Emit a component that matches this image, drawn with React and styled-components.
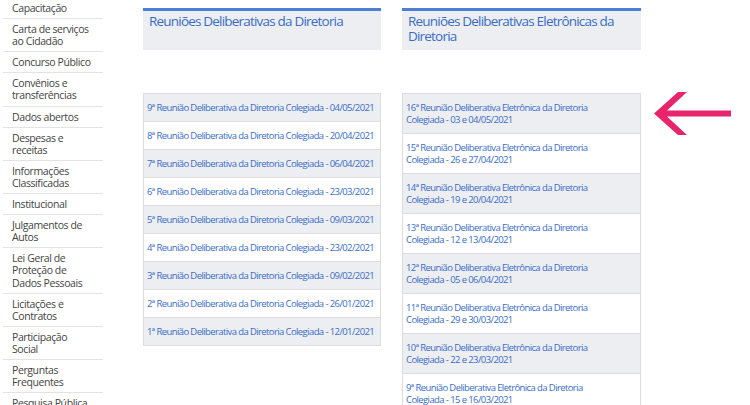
import React from "react";
import styled, { createGlobalStyle } from "styled-components";

const Global = createGlobalStyle`
  html, body { margin: 0; padding: 0; background: #fff; overflow: hidden; }
  body { font-family: "Open Sans", "Liberation Sans", sans-serif; }
`;

const Page = styled.div`
  display: flex;
  align-items: flex-start;
  height: 405px;
  overflow: hidden;
  padding-left: 3px;
`;

const Sidebar = styled.ul`
  list-style: none;
  margin: -2px 0 0 0;
  padding: 0;
  width: 100px;
  flex-shrink: 0;
`;

const SideItem = styled.li`
  padding: 4px 10px 4px 9px;
  border-bottom: 1px solid #e3e3e3;
  font-size: 10.5px;
  letter-spacing: -0.4px;
  line-height: 12.1px;
  color: #444;
`;

const Columns = styled.div`
  display: flex;
  gap: 21px;
  margin-left: 40px;
  padding-top: 8px;
`;

const Column = styled.div`
  width: ${(p) => p.$w}px;
  display: flex;
  flex-direction: column;
`;

const Header = styled.div`
  border-top: 3px solid #4a7fd6;
  background: #eceef1;
  height: 42px;
  padding: 3px 6px 0;
  box-sizing: border-box;
  font-size: 13.5px;
  letter-spacing: -0.8px;
  line-height: 15px;
  color: #3a6cc6;
`;

const List = styled.div`
  margin-top: 43px;
  border: 1px solid #dcdcdc;
  border-bottom: none;
`;

const Row = styled.div`
  background: ${(p) => (p.$alt ? "#eceef1" : "#fff")};
  border-bottom: 1px solid #dcdcdc;
  padding: 8px ${(p) => p.$pr}px 7px 3px;
  font-size: 9.5px;
  letter-spacing: -0.6px;
  line-height: 12px;
  color: #3a6cc6;
  white-space: ${(p) => (p.$nowrap ? "nowrap" : "normal")};
`;

const ArrowWrap = styled.div`
  margin-left: 12px;
  margin-top: 91px;
`;

const side = [
  "Capacitação",
  "Carta de serviços ao Cidadão",
  "Concurso Público",
  "Convênios e transferências",
  "Dados abertos",
  "Despesas e receitas",
  "Informações Classificadas",
  "Institucional",
  "Julgamentos de Autos",
  "Lei Geral de Proteção de Dados Pessoais",
  "Licitações e Contratos",
  "Participação Social",
  "Perguntas Frequentes",
  "Pesquisa Pública",
];

const left = [
  "9ª Reunião Deliberativa da Diretoria Colegiada - 04/05/2021",
  "8ª Reunião Deliberativa da Diretoria Colegiada - 20/04/2021",
  "7ª Reunião Deliberativa da Diretoria Colegiada - 06/04/2021",
  "6ª Reunião Deliberativa da Diretoria Colegiada - 23/03/2021",
  "5ª Reunião Deliberativa da Diretoria Colegiada - 09/03/2021",
  "4ª Reunião Deliberativa da Diretoria Colegiada - 23/02/2021",
  "3ª Reunião Deliberativa da Diretoria Colegiada - 09/02/2021",
  "2ª Reunião Deliberativa da Diretoria Colegiada - 26/01/2021",
  "1ª Reunião Deliberativa da Diretoria Colegiada - 12/01/2021",
];

const right = [
  "16ª Reunião Deliberativa Eletrônica da Diretoria Colegiada - 03 e 04/05/2021",
  "15ª Reunião Deliberativa Eletrônica da Diretoria Colegiada - 26 e 27/04/2021",
  "14ª Reunião Deliberativa Eletrônica da Diretoria Colegiada - 19 e 20/04/2021",
  "13ª Reunião Deliberativa Eletrônica da Diretoria Colegiada - 12 e 13/04/2021",
  "12ª Reunião Deliberativa Eletrônica da Diretoria Colegiada - 05 e 06/04/2021",
  "11ª Reunião Deliberativa Eletrônica da Diretoria Colegiada - 29 e 30/03/2021",
  "10ª Reunião Deliberativa Eletrônica da Diretoria Colegiada - 22 e 23/03/2021",
  "9ª Reunião Deliberativa Eletrônica da Diretoria Colegiada - 15 e 16/03/2021",
];

export default function App() {
  return (
    <>
      <Global />
      <Page>
        <Sidebar>
          {side.map((s) => (
            <SideItem key={s}>{s}</SideItem>
          ))}
        </Sidebar>
        <Columns>
          <Column $w={238}>
            <Header>Reuniões Deliberativas da Diretoria</Header>
            <List>
              {left.map((t, i) => (
                <Row key={t} $alt={i % 2 === 0} $pr={2} $nowrap>{t}</Row>
              ))}
            </List>
          </Column>
          <Column $w={239}>
            <Header>Reuniões Deliberativas Eletrônicas da Diretoria</Header>
            <List>
              {right.map((t, i) => (
                <Row key={t} $alt={i % 2 === 0} $pr={40}>{t}</Row>
              ))}
            </List>
          </Column>
        </Columns>
        <ArrowWrap>
          <svg width="80" height="46" viewBox="0 0 80 46">
            <path d="M1 22.5 L25 1 L34 1 L14 19.5 L78 19.5 L78 25.5 L14 25.5 L34 44 L25 44 Z" fill="#e8246c" />
          </svg>
        </ArrowWrap>
      </Page>
    </>
  );
}
